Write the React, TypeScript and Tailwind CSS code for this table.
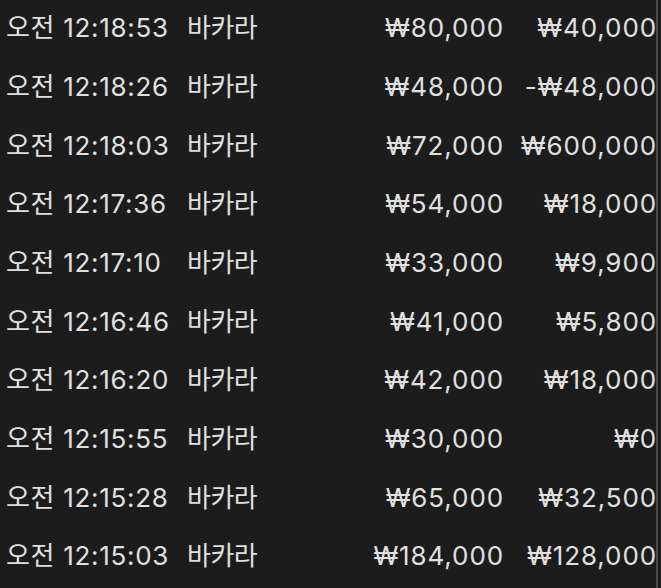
import React from 'react';

type Row = { time: string; game: string; bet: string; result: string };

const rows: Row[] = [
  { time: '오전 12:18:53', game: '바카라', bet: '₩80,000', result: '₩40,000' },
  { time: '오전 12:18:26', game: '바카라', bet: '₩48,000', result: '-₩48,000' },
  { time: '오전 12:18:03', game: '바카라', bet: '₩72,000', result: '₩600,000' },
  { time: '오전 12:17:36', game: '바카라', bet: '₩54,000', result: '₩18,000' },
  { time: '오전 12:17:10', game: '바카라', bet: '₩33,000', result: '₩9,900' },
  { time: '오전 12:16:46', game: '바카라', bet: '₩41,000', result: '₩5,800' },
  { time: '오전 12:16:20', game: '바카라', bet: '₩42,000', result: '₩18,000' },
  { time: '오전 12:15:55', game: '바카라', bet: '₩30,000', result: '₩0' },
  { time: '오전 12:15:28', game: '바카라', bet: '₩65,000', result: '₩32,500' },
  { time: '오전 12:15:03', game: '바카라', bet: '₩184,000', result: '₩128,000' },
];

export default function App() {
  return (
    <div className="flex h-[588px] w-[661px] overflow-hidden bg-[#1c1c1c] text-[#e0e0e0] font-['Inter','Noto_Sans_CJK_KR',sans-serif]">
      <div className="flex-1 -mt-[1px]">
        {rows.map((r, i) => (
          <div key={i} className="flex h-[58.67px] items-center whitespace-nowrap pl-[6px] text-[26px] leading-none">
            <span className="w-[181px] shrink-0 tracking-[0.7px]">{r.time}</span>
            <span className="flex-1 tracking-[-0.5px]">{r.game}</span>
            <span className="w-[150px] shrink-0 text-right tracking-[0.9px] -mr-[5px]">{r.bet}</span>
            <span className="w-[158px] shrink-0 text-right tracking-[0.9px] -mr-[1px]">{r.result}</span>
          </div>
        ))}
      </div>
      <div className="w-[2px] shrink-0 bg-[#4a4a4a]" />
      <div className="w-[3px] shrink-0 bg-[#1a1a1a]" />
    </div>
  );
}
